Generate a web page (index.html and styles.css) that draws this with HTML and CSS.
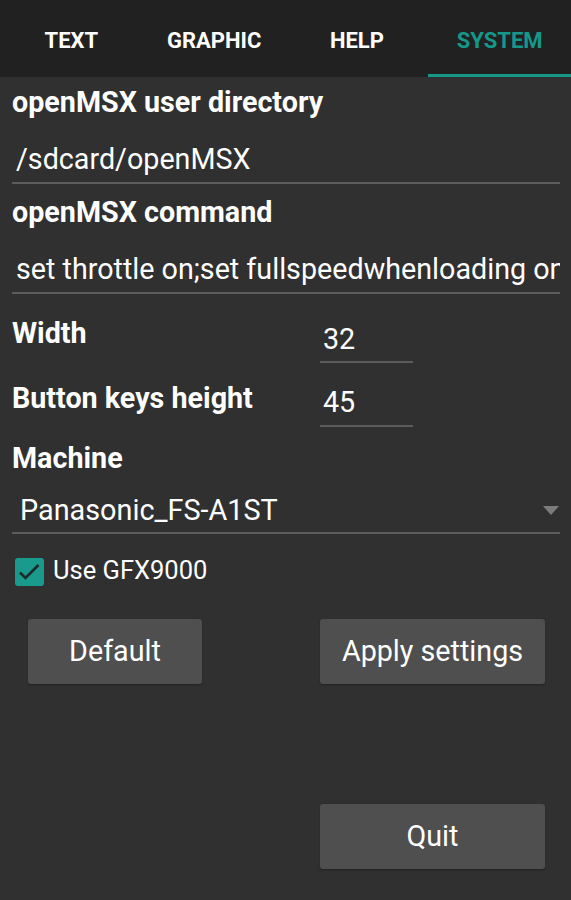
FILE: index.html
```html
<!DOCTYPE html>
<html>
<head>
<meta charset="utf-8">
<link rel="stylesheet" href="styles.css">
</head>
<body>
<div class="tabs">
  <div class="tab">TEXT</div>
  <div class="tab">GRAPHIC</div>
  <div class="tab">HELP</div>
  <div class="tab active">SYSTEM</div>
</div>
<div class="content">
  <div class="label first">openMSX user directory</div>
  <div class="field wide">/sdcard/openMSX</div>
  <div class="label second">openMSX command</div>
  <div class="field wide clip">set throttle on;set fullspeedwhenloading on</div>

  <div class="numrow row1">
    <div class="label inline">Width</div>
    <div class="field num">32</div>
  </div>
  <div class="numrow row2">
    <div class="label inline">Button keys height</div>
    <div class="field num">45</div>
  </div>

  <div class="label machine">Machine</div>
  <div class="spinner">
    <span>Panasonic_FS-A1ST</span>
    <span class="arrow"></span>
  </div>

  <div class="check">
    <span class="box"><svg width="29" height="28" viewBox="0 0 29 28"><path d="M5 14.5 L10.5 20 L23.5 7" fill="none" stroke="#1e2a28" stroke-width="2.6"/></svg></span>
    <span class="checklabel">Use GFX9000</span>
  </div>

  <div class="btnrow">
    <div class="btn small">Default</div>
    <div class="btn big">Apply settings</div>
  </div>
  <div class="btnrow quitrow">
    <div class="btn big">Quit</div>
  </div>
</div>
</body>
</html>
```
FILE: styles.css
```css
html, body {
  margin: 0;
  padding: 0;
}
body {
  width: 571px;
  height: 900px;
  overflow: hidden;
  background: #303030;
  font-family: Roboto, "Liberation Sans", sans-serif;
  color: #ffffff;
}
.tabs {
  display: grid;
  grid-template-columns: repeat(4, 1fr);
  height: 77px;
  background: #212121;
}
.tab {
  display: flex;
  align-items: flex-start;
  justify-content: center;
  padding-top: 28px;
  font-size: 22px;
  line-height: 26px;
  font-weight: 700;
  box-sizing: border-box;
  border-bottom: 3px solid transparent;
}
.tab.active {
  color: #15978a;
  border-bottom-color: #15978a;
}
.content {
  padding: 0 11px 0 12px;
}
.label {
  font-size: 28.7px;
  font-weight: 700;
  line-height: 34px;
}
.label.first {
  padding-top: 8px;
}
.label.second {
  padding-top: 11px;
}
.field {
  font-size: 28.7px;
  line-height: 34px;
  border-bottom: 2px solid #5c5c5c;
  box-sizing: border-box;
}
.field.wide {
  padding: 23px 0 6px 4px;
}
.clip {
  white-space: nowrap;
  overflow: hidden;
}
.numrow {
  display: grid;
  grid-template-columns: 308px 93px;
  align-items: start;
}
.row1 .label.inline { padding-top: 22px; }
.row1 .field.num { padding: 28px 0 5px 3px; }
.row2 .label.inline { padding-top: 18px; }
.row2 .field.num { padding: 22px 0 6px 3px; }
.label.machine {
  padding-top: 14px;
}
.spinner {
  display: flex;
  align-items: center;
  justify-content: space-between;
  font-size: 28.8px;
  line-height: 34px;
  padding: 18px 0 5px 8px;
  border-bottom: 2px solid #5c5c5c;
}
.arrow {
  width: 0;
  height: 0;
  border-left: 8px solid transparent;
  border-right: 8px solid transparent;
  border-top: 9px solid #7c7c7c;
  margin-right: 1px;
}
.check {
  display: flex;
  align-items: center;
  gap: 9px;
  padding: 22px 0 0 3px;
}
.box {
  width: 29px;
  height: 28px;
  border-radius: 3px;
  background: #1a9a8c;
  display: flex;
}
.checklabel {
  font-size: 25.5px;
  line-height: 28px;
  padding-bottom: 3px;
}
.btnrow {
  display: flex;
  justify-content: space-between;
  padding: 32px 15px 0 16px;
}
.quitrow {
  justify-content: flex-end;
  padding-top: 120px;
}
.btn {
  height: 65px;
  background: #4f4f4f;
  border-radius: 3px;
  display: flex;
  align-items: center;
  justify-content: center;
  font-size: 28.7px;
  padding-bottom: 2px;
  box-sizing: border-box;
  box-shadow: 0 1px 2px rgba(0,0,0,0.3);
}
.btn.small { width: 174px; }
.btn.big { width: 225px; }
```
